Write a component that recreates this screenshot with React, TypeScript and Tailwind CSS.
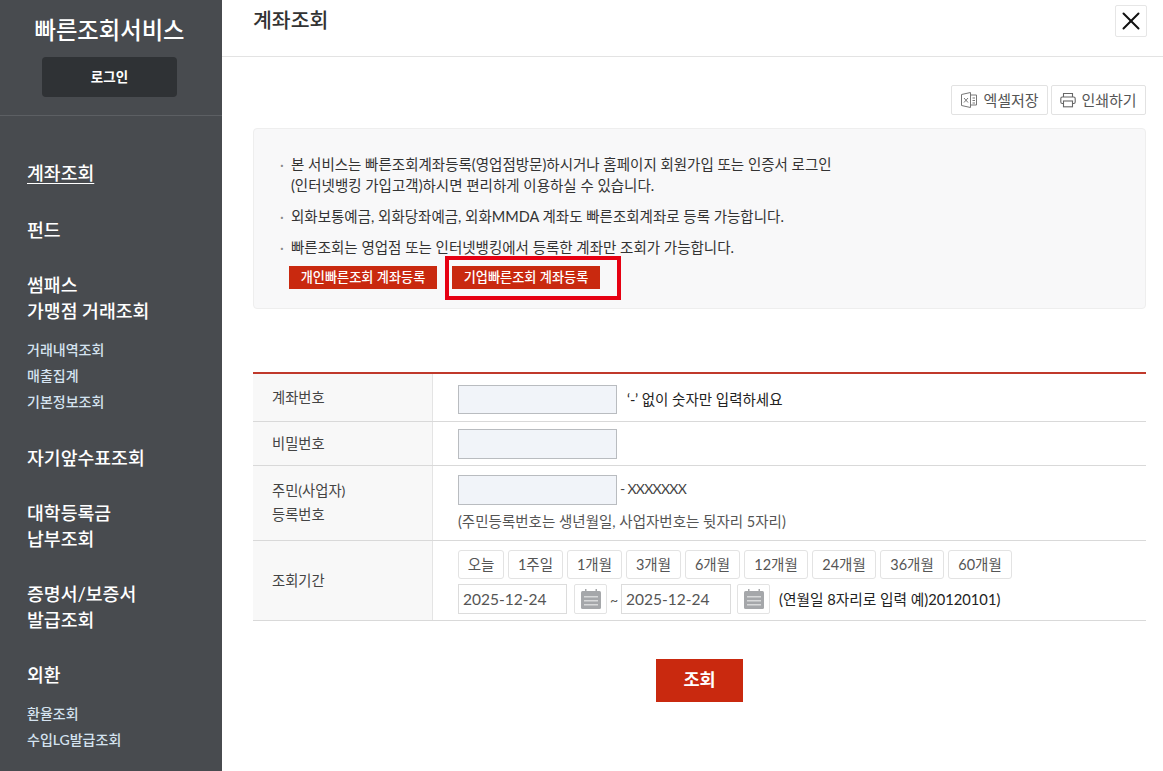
import { X } from "lucide-react";

const FONT = "font-['Lato','Noto_Sans_CJK_KR',sans-serif]";

const periods = [
  { label: "오늘", width: "w-[46px]" },
  { label: "1주일", width: "w-[55px]" },
  { label: "1개월", width: "w-[55px]" },
  { label: "3개월", width: "w-[55px]" },
  { label: "6개월", width: "w-[55px]" },
  { label: "12개월", width: "w-[64px]" },
  { label: "24개월", width: "w-[64px]" },
  { label: "36개월", width: "w-[64px]" },
  { label: "60개월", width: "w-[64px]" },
];

function CalendarIcon() {
  return (
    <button className="w-[33px] h-[30px] border border-[#e3e3e3] rounded-[2px] flex items-center justify-center bg-white">
      <svg width="20" height="20" viewBox="0 0 20 20">
        <rect x="0" y="2" width="20" height="18" rx="1.5" fill="#a5a7aa" />
        <rect x="4" y="0" width="1.5" height="4" fill="#a5a7aa" />
        <rect x="14.5" y="0" width="1.5" height="4" fill="#a5a7aa" />
        <rect x="3" y="7" width="14" height="1.5" fill="#d8d9da" />
        <rect x="3" y="11" width="14" height="1.5" fill="#d8d9da" />
        <rect x="3" y="15" width="14" height="1.5" fill="#d8d9da" />
      </svg>
    </button>
  );
}

function ExcelIcon() {
  return (
    <svg width="18" height="18" viewBox="0 0 18 18" fill="none" stroke="#777" strokeWidth="1">
      <path d="M1.5 3.5 L10.5 1.5 V16.5 L1.5 14.5 Z" />
      <path d="M10.5 4 H16.5 V14 H10.5" />
      <path d="M4 7 L8 11.5 M8 7 L4 11.5" />
      <path d="M12.5 7 H15 M12.5 9.5 H15 M12.5 12 H15" />
    </svg>
  );
}

function PrintIcon() {
  return (
    <svg width="16" height="16" viewBox="0 0 16 16" fill="none" stroke="#666" strokeWidth="1.1">
      <path d="M3.5 5 V1.5 H12.5 V5" />
      <rect x="0.8" y="5" width="14.4" height="6.5" rx="1.5" />
      <rect x="3.5" y="9" width="9" height="5.8" fill="#fff" />
    </svg>
  );
}

function Row({ label, className, children }: { label: React.ReactNode; className: string; children: React.ReactNode }) {
  return (
    <div className={`flex border-b border-[#d9d9d9] ${className}`}>
      <div className="w-[180px] shrink-0 bg-[#f8f8f8] border-r border-[#e4e4e4] pl-[19px] flex items-center text-[14.3px] leading-[24px] text-[#444]">
        {label}
      </div>
      <div className="flex-1 pl-[25px]">{children}</div>
    </div>
  );
}

function TextBox({ className = "" }: { className?: string }) {
  return <input className={`w-[159px] border border-[#b9bcc0] bg-[#f1f4f9] ${className}`} />;
}

export default function App() {
  return (
    <div className={`${FONT} flex h-[771px] w-[1163px] overflow-hidden bg-white`}>
      {/* 사이드 메뉴 */}
      <aside className="w-[222px] shrink-0 bg-[#484b4f] text-white">
        <div className="h-[116px] border-b border-[#5c5f63] flex flex-col items-center pt-[14px] pr-[3px]">
          <h1 className="text-[23.3px] leading-[33px] font-medium">빠른조회서비스</h1>
          <button className="mt-[10px] w-[135px] h-[40px] rounded-[4px] bg-[#2f3235] text-[13.5px] font-bold">로그인</button>
        </div>
        <nav className="pl-[27px] pt-[44px] text-[18.3px] font-medium leading-[26px]">
          <a className="block underline underline-offset-[3px]">계좌조회</a>
          <a className="block mt-[31px]">펀드</a>
          <a className="block mt-[29px]">
            썸패스
            <br />
            가맹점 거래조회
          </a>
          <ul className="mt-[13px] text-[14px] font-medium leading-[26px] text-[#d5e3f0]">
            <li>거래내역조회</li>
            <li>매출집계</li>
            <li>기본정보조회</li>
          </ul>
          <a className="block mt-[30px]">자기앞수표조회</a>
          <a className="block mt-[29px]">
            대학등록금
            <br />
            납부조회
          </a>
          <a className="block mt-[29px]">
            증명서/보증서
            <br />
            발급조회
          </a>
          <a className="block mt-[29px]">외환</a>
          <ul className="mt-[13px] text-[14px] font-medium leading-[26px] text-[#d5e3f0]">
            <li>환율조회</li>
            <li>수입LG발급조회</li>
          </ul>
        </nav>
      </aside>

      {/* 본문 */}
      <main className="flex-1 min-w-0">
        <header className="h-[57px] border-b border-[#e3e3e3] flex justify-between pl-[31px] pr-[16px]">
          <h2 className="text-[20.5px] leading-[40px] font-medium text-[#333]">계좌조회</h2>
          <button className="mt-[5px] w-[32px] h-[32px] border border-[#e6e6e6] rounded-[2px] flex items-center justify-center">
            <X size={30} strokeWidth={1.6} color="#111" className="shrink-0" />
          </button>
        </header>

        <div className="pl-[31px] pr-[17px]">
          <div className="flex justify-end gap-[3px] pt-[28px]">
            <button className="w-[97px] h-[30px] border border-[#e2e2e2] rounded-[2px] flex items-center justify-center gap-[5px] text-[15px] text-[#555]">
              <ExcelIcon />
              엑셀저장
            </button>
            <button className="w-[95px] h-[30px] border border-[#e2e2e2] rounded-[2px] flex items-center justify-center gap-[5px] text-[15px] text-[#555]">
              <PrintIcon />
              인쇄하기
            </button>
          </div>

          {/* 안내 박스 */}
          <section className="relative mt-[13px] h-[181px] bg-[#f8f8f9] border border-[#eeeeee] rounded-[4px] pt-[25px] pl-[26px] text-[14.5px] leading-[21px] text-[#333]">
            <ul className="flex flex-col gap-[10px]">
              <li className="relative pl-[11px]">
                <span className="absolute left-0 top-0 text-[#888]">·</span>
                본 서비스는 빠른조회계좌등록(영업점방문)하시거나 홈페이지 회원가입 또는 인증서 로그인
                <br />
                (인터넷뱅킹 가입고객)하시면 편리하게 이용하실 수 있습니다.
              </li>
              <li className="relative pl-[11px]">
                <span className="absolute left-0 top-0 text-[#888]">·</span>
                외화보통예금, 외화당좌예금, 외화MMDA 계좌도 빠른조회계좌로 등록 가능합니다.
              </li>
              <li className="relative pl-[11px]">
                <span className="absolute left-0 top-0 text-[#888]">·</span>
                빠른조회는 영업점 또는 인터넷뱅킹에서 등록한 계좌만 조회가 가능합니다.
              </li>
            </ul>
            <div className="flex gap-[15px] mt-[8px] ml-[9px]">
              <button className="w-[148px] h-[23px] bg-[#c9290f] text-white text-[13.2px] font-medium">개인빠른조회 계좌등록</button>
              <button className="w-[148px] h-[23px] bg-[#c9290f] text-white text-[13.2px] font-medium">기업빠른조회 계좌등록</button>
            </div>
            {/* 강조 표시 */}
            <div className="absolute left-[191px] top-[127px] w-[176px] h-[44px] border-[4px] border-[#e60012]" />
          </section>

          {/* 조회 폼 */}
          <div className="mt-[63px] border-t-2 border-[#c0392b]">
            <Row label="계좌번호" className="h-[48px]">
              <div className="flex items-center pt-[11px] gap-[10px]">
                <TextBox className="h-[29px]" />
                <span className="text-[14.5px] text-[#222]">‘-’ 없이 숫자만 입력하세요</span>
              </div>
            </Row>
            <Row label="비밀번호" className="h-[44px]">
              <div className="flex items-center h-full">
                <TextBox className="h-[30px]" />
              </div>
            </Row>
            <Row
              label={
                <span>
                  주민(사업자)
                  <br />
                  등록번호
                </span>
              }
              className="h-[75px]"
            >
              <div className="pt-[9px]">
                <div className="flex items-center gap-[3px]">
                  <TextBox className="h-[30px]" />
                  <span className="text-[14px] tracking-[-0.7px] text-[#444] -mt-[3px]">- XXXXXXX</span>
                </div>
                <p className="mt-[6px] text-[14.5px] leading-[22px] text-[#555]">(주민등록번호는 생년월일, 사업자번호는 뒷자리 5자리)</p>
              </div>
            </Row>
            <Row label="조회기간" className="h-[80px]">
              <div className="pt-[9px] flex flex-col gap-[5px]">
                <div className="flex gap-[4px]">
                  {periods.map((p) => (
                    <button key={p.label} className={`${p.width} h-[29px] border border-[#e3e3e3] rounded-[3px] text-[14.5px] text-[#555]`}>
                      {p.label}
                    </button>
                  ))}
                </div>
                <div className="flex items-center">
                  <input
                    readOnly
                    value="2025-12-24"
                    className="w-[109px] h-[30px] border border-[#dcdcdc] pl-[4px] text-[15.5px] text-[#555]"
                  />
                  <span className="ml-[7px]"><CalendarIcon /></span>
                  <span className="w-[14px] text-center text-[14px] text-[#555]">~</span>
                  <input
                    readOnly
                    value="2025-12-24"
                    className="w-[110px] h-[30px] border border-[#dcdcdc] pl-[4px] text-[15.5px] text-[#555]"
                  />
                  <span className="ml-[6px]"><CalendarIcon /></span>
                  <span className="ml-[9px] text-[14.7px] text-[#222]">(연월일 8자리로 입력 예)20120101)</span>
                </div>
              </div>
            </Row>
          </div>

          <div className="flex justify-center mt-[38px]">
            <button className="w-[87px] h-[43px] bg-[#c9290f] text-white text-[17.5px] font-bold">조회</button>
          </div>
        </div>
      </main>
    </div>
  );
}
